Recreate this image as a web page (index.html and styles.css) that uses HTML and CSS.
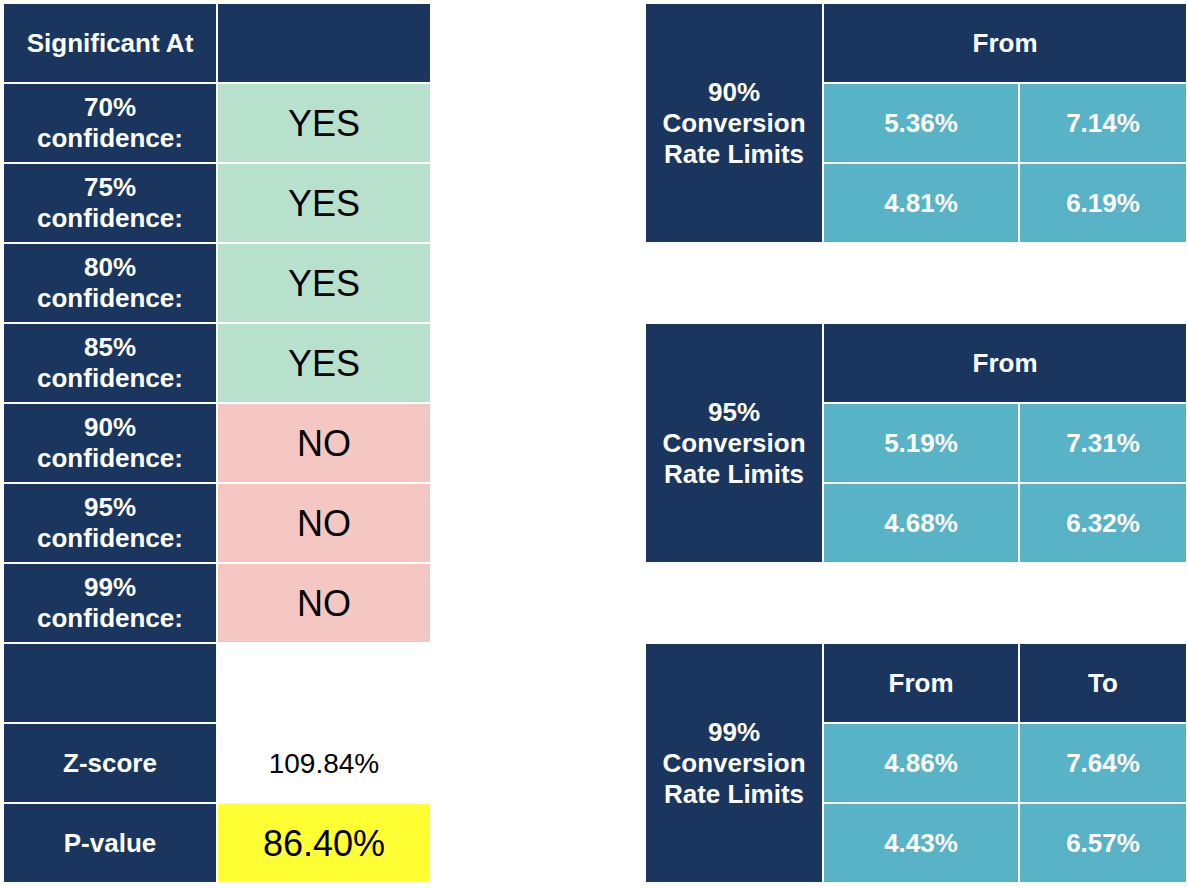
FILE: index.html
```html
<!DOCTYPE html>
<html lang="en">
<head>
<meta charset="utf-8">
<title>Significance</title>
<link rel="stylesheet" href="styles.css">
</head>
<body>
<div class="page">
  <div class="sig">
    <div class="cell head">Significant At</div>
    <div class="cell head"></div>

    <div class="cell head">70%<br>confidence:</div>
    <div class="cell yes">YES</div>
    <div class="cell head">75%<br>confidence:</div>
    <div class="cell yes">YES</div>
    <div class="cell head">80%<br>confidence:</div>
    <div class="cell yes">YES</div>
    <div class="cell head">85%<br>confidence:</div>
    <div class="cell yes">YES</div>
    <div class="cell head">90%<br>confidence:</div>
    <div class="cell no">NO</div>
    <div class="cell head">95%<br>confidence:</div>
    <div class="cell no">NO</div>
    <div class="cell head">99%<br>confidence:</div>
    <div class="cell no">NO</div>

    <div class="cell head"></div>
    <div class="cell blank"></div>
    <div class="cell head">Z-score</div>
    <div class="cell zval">109.84%</div>
    <div class="cell head">P-value</div>
    <div class="cell pval">86.40%</div>
  </div>

  <div class="limits">
    <div class="ltable">
      <div class="cell head label">90%<br>Conversion<br>Rate Limits</div>
      <div class="cell head span2">From</div>
      <div class="cell val">5.36%</div>
      <div class="cell val">7.14%</div>
      <div class="cell val">4.81%</div>
      <div class="cell val">6.19%</div>
    </div>
    <div class="ltable">
      <div class="cell head label">95%<br>Conversion<br>Rate Limits</div>
      <div class="cell head span2">From</div>
      <div class="cell val">5.19%</div>
      <div class="cell val">7.31%</div>
      <div class="cell val">4.68%</div>
      <div class="cell val">6.32%</div>
    </div>
    <div class="ltable">
      <div class="cell head label">99%<br>Conversion<br>Rate Limits</div>
      <div class="cell head">From</div>
      <div class="cell head">To</div>
      <div class="cell val">4.86%</div>
      <div class="cell val">7.64%</div>
      <div class="cell val">4.43%</div>
      <div class="cell val">6.57%</div>
    </div>
  </div>
</div>
</body>
</html>
```

FILE: styles.css
```css
html, body {
  margin: 0;
  padding: 0;
  background: #ffffff;
}
body {
  padding: 4px;
  font-family: "Liberation Sans", Arial, sans-serif;
}
.page {
  display: flex;
  align-items: flex-start;
}
.sig {
  display: grid;
  grid-template-columns: 212px 212px;
  grid-auto-rows: 78px;
  gap: 2px;
}
.limits {
  margin-left: 216px;
  display: flex;
  flex-direction: column;
  gap: 82px;
}
.ltable {
  display: grid;
  grid-template-columns: 176px 194px 166px;
  grid-template-rows: 78px 78px 78px;
  gap: 2px;
}
.cell {
  display: flex;
  align-items: center;
  justify-content: center;
  text-align: center;
  line-height: 31px;
}
.head {
  background: #1a365e;
  color: #ffffff;
  font-weight: bold;
  font-size: 26px;
}
.label {
  grid-row: 1 / span 3;
}
.span2 {
  grid-column: 2 / span 2;
}
.val {
  background: #59b3c7;
  color: #ffffff;
  font-weight: bold;
  font-size: 26px;
}
.yes {
  background: #b7e1cd;
  color: #000000;
  font-size: 36px;
}
.no {
  background: #f4c7c3;
  color: #000000;
  font-size: 36px;
}
.blank {
  background: #ffffff;
}
.zval {
  background: #ffffff;
  color: #000000;
  font-size: 28px;
}
.pval {
  background: #ffff33;
  color: #000000;
  font-size: 36px;
}
```
